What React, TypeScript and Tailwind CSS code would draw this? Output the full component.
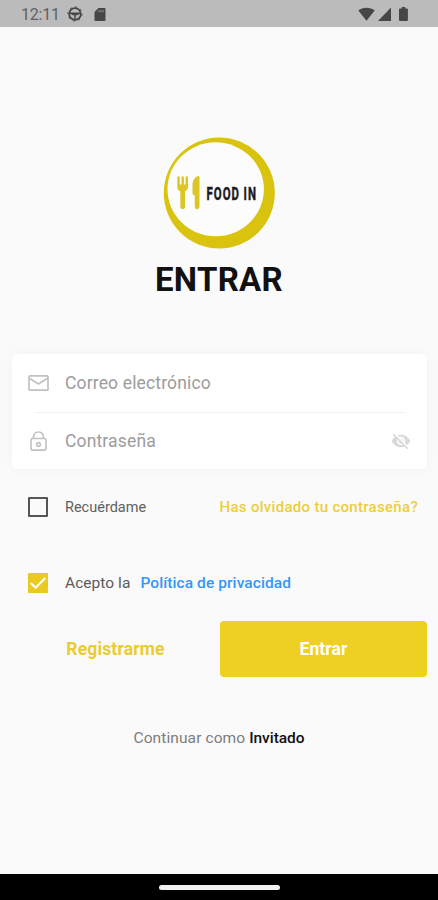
import { useState } from "react";

function StatusBar() {
  return (
    <div className="flex h-[27px] items-center justify-between bg-[#bbbbbb] pl-[21px] pr-[30px] text-[#464646]">
      <div className="flex items-center">
        <span className="w-[38px] whitespace-nowrap pt-[2px] text-[16px] leading-[27px] tracking-[-0.2px] text-[#606060]">
          12:11
        </span>
        <svg className="ml-2 h-4 w-4" viewBox="0 0 16 16" fill="none" stroke="currentColor">
          <circle cx="8" cy="8" r="5.8" strokeWidth="1.8" />
          <circle cx="8" cy="8" r="7.1" strokeWidth="1" strokeDasharray="1.8 3.77" />
          <path d="M2.5 7.3h11M8 7.5v6M4.5 8 8 9l3.5-1" strokeWidth="1.4" />
        </svg>
        <svg className="ml-[11px] mt-px h-[13px] w-[12px]" viewBox="0 0 11 13" fill="currentColor">
          <path d="M4 0h6a1 1 0 0 1 1 1v11a1 1 0 0 1-1 1H1a1 1 0 0 1-1-1V4z" />
          <path d="M4.5 2v2.3M6.5 2v2.3M8.5 2v2.3" stroke="#999" strokeWidth="0.9" />
        </svg>
      </div>
      <div className="flex items-center gap-[3px]">
        <svg className="h-[14px] w-[17px]" viewBox="0 0 17 14" fill="currentColor">
          <path d="M0.3 3.6C5 -0.2 12 -0.2 16.7 3.6L8.5 13.7z" />
        </svg>
        <svg className="h-[14px] w-[13px]" viewBox="0 0 13 14" fill="currentColor">
          <path d="M13 0.5V14H0z" />
        </svg>
        <svg className="ml-[5px] h-[14px] w-[9px]" viewBox="0 0 9 14" fill="currentColor">
          <path d="M2.8 0h3.4v1.4H8a.9.9 0 0 1 .9.9V13a1 1 0 0 1-1 1H1a1 1 0 0 1-1-1V2.3a.9.9 0 0 1 .9-.9h1.9z" />
        </svg>
      </div>
    </div>
  );
}

function Logo() {
  return (
    <svg className="h-28 w-28 overflow-visible" viewBox="0 0 112 112">
      <circle cx="56.3" cy="56" r="55.5" fill="#d9c30e" />
      <ellipse cx="52.7" cy="52.3" rx="48.2" ry="47" fill="#fcfcfc" />
      <g fill="#dcc527">
        <path d="M14.3 40.5a1.2 1.2 0 0 1 2.4 0v7h1.8v-7a1.2 1.2 0 0 1 2.4 0v7h1.7v-7a1.2 1.2 0 0 1 2.4 0v9.2c0 2.6-1.3 4-2.9 4.6v15.5a2.4 2.4 0 0 1-4.8 0V54.3c-1.7-.6-3-2-3-4.6z" />
        <path d="M36.5 40.7v29.1a2.4 2.4 0 0 1-4.8 0V58.5c-1.4-.3-2.2-1.2-2.2-2.5v-8c0-4.5 2.4-8 5.2-8.8 1.1-.3 1.8.3 1.8 1.5z" />
      </g>
      {/* condensed lettering */}
      <text
        transform="translate(43.6 62.5) scale(0.6 1)"
        fill="#1b1a22"
        stroke="#1b1a22"
        strokeWidth="0.5"
        className="font-['Roboto','Liberation_Sans',sans-serif] text-[19px] font-bold tracking-[1.6px]"
      >
        FOOD IN
      </text>
    </svg>
  );
}

function MailIcon() {
  return (
    <svg className="h-4 w-[21px]" viewBox="0 0 21 16" fill="none" stroke="#c1c1c1" strokeWidth="1.7">
      <rect x="1" y="0.9" width="19" height="14.3" rx="1" />
      <path d="M1.5 3.2 10.5 9l9-5.8" />
    </svg>
  );
}

function LockIcon() {
  return (
    <svg className="h-5 w-[17px]" viewBox="0 0 17 20" fill="none" stroke="#c1c1c1" strokeWidth="1.6">
      <rect x="1" y="7.5" width="15" height="11.6" rx="1.8" />
      <path d="M3.3 7.5C3.3 3.5 5.3 1 8.5 1s5.2 2.5 5.2 6.5" />
      <circle cx="8.5" cy="13.4" r="1.8" />
    </svg>
  );
}

function EyeOffIcon() {
  return (
    <svg className="h-5 w-5" viewBox="0 0 24 24" fill="#d9d9d9">
      <path d="M12 7c2.76 0 5 2.24 5 5 0 .65-.13 1.26-.36 1.83l2.92 2.92c1.51-1.26 2.7-2.89 3.43-4.75-1.73-4.39-6-7.5-11-7.5-1.4 0-2.74.25-3.98.7l2.16 2.16C10.74 7.13 11.35 7 12 7zM2 4.27l2.28 2.28.46.46C3.08 8.3 1.78 10.02 1 12c1.73 4.39 6 7.5 11 7.5 1.55 0 3.03-.3 4.38-.84l.42.42L19.73 22 21 20.73 3.27 3 2 4.27zM7.53 9.8l1.55 1.55c-.05.21-.08.43-.08.65 0 1.66 1.34 3 3 3 .22 0 .44-.03.65-.08l1.55 1.55c-.67.33-1.41.53-2.2.53-2.76 0-5-2.24-5-5 0-.79.2-1.53.53-2.2zm4.31-.78l3.15 3.15.02-.16c0-1.66-1.34-3-3-3l-.17.01z" />
    </svg>
  );
}

function Checkbox({ checked, onChange }: { checked: boolean; onChange: () => void }) {
  return (
    <button
      type="button"
      role="checkbox"
      aria-checked={checked}
      onClick={onChange}
      className={
        checked
          ? "flex h-5 w-5 items-center justify-center rounded-[1px] bg-[#eaca20]"
          : "h-5 w-5 rounded-[1px] border-2 border-[#555555]"
      }
    >
      {checked && (
        <svg className="h-5 w-5" viewBox="0 0 20 20" fill="none" stroke="#fff" strokeWidth="2.2">
          <path d="M2.8 10 7.6 14.7 17.3 5" />
        </svg>
      )}
    </button>
  );
}

export default function App() {
  const [email, setEmail] = useState("");
  const [password, setPassword] = useState("");
  const [showPassword, setShowPassword] = useState(false);
  const [remember, setRemember] = useState(false);
  const [accepted, setAccepted] = useState(true);

  return (
    <div className="flex h-[900px] w-[438px] flex-col overflow-hidden bg-[#fafafa] font-['Roboto','Liberation_Sans',sans-serif]">
      <StatusBar />

      <main className="flex flex-1 flex-col">
        <div className="flex flex-col items-center pt-[110px]">
          <Logo />
          <h1 className="mt-[11px] whitespace-nowrap text-[33px] font-bold leading-10 tracking-[0.3px] text-[#111111]">
            ENTRAR
          </h1>
        </div>

        <form onSubmit={(e) => e.preventDefault()}>
          <div className="ml-3 mr-[11px] mt-[54px] h-[115px] rounded-[5px] bg-white shadow-[0_0_12px_rgba(0,0,0,0.035)]">
            <div className="flex h-[58px] items-center pl-4">
              <MailIcon />
              <input
                type="email"
                value={email}
                onChange={(e) => setEmail(e.target.value)}
                placeholder="Correo electrónico"
                className="ml-4 w-[300px] bg-transparent text-[17.5px] tracking-[0.15px] outline-none placeholder:text-[#9c9c9c]"
              />
            </div>
            <div className="ml-6 mr-[22px] h-px bg-[#f1f1f1]" />
            <div className="flex h-[56px] items-center pl-[18px] pr-4">
              <LockIcon />
              <input
                type={showPassword ? "text" : "password"}
                value={password}
                onChange={(e) => setPassword(e.target.value)}
                placeholder="Contraseña"
                className="ml-[18px] w-[300px] bg-transparent text-[17.5px] tracking-[0.15px] outline-none placeholder:text-[#9c9c9c]"
              />
              <button type="button" onClick={() => setShowPassword(!showPassword)} className="ml-auto">
                <EyeOffIcon />
              </button>
            </div>
          </div>

          <div className="mt-7 flex h-5 items-center pl-7 pr-5">
            <Checkbox checked={remember} onChange={() => setRemember(!remember)} />
            <span className="ml-[17px] whitespace-nowrap pt-px text-[14.5px] text-[#606060]">
              Recuérdame
            </span>
            <a href="#" className="ml-auto whitespace-nowrap pt-px text-[15px] font-medium tracking-[0.3px] text-[#ecce3c]">
              Has olvidado tu contraseña?
            </a>
          </div>

          <div className="mt-14 flex h-5 items-center pl-7">
            <Checkbox checked={accepted} onChange={() => setAccepted(!accepted)} />
            <span className="ml-[17px] whitespace-nowrap pt-[2px] text-[15.5px] tracking-[0.05px] text-[#5c5c5c]">
              Acepto la
            </span>
            <a href="#" className="ml-[10px] whitespace-nowrap pt-[2px] text-[15.5px] font-medium tracking-[0.08px] text-[#3396fa]">
              Política de privacidad
            </a>
          </div>

          <div className="mt-7 flex h-14 pl-3 pr-[11px]">
            <button type="button" className="flex-1 pr-px pt-px text-[17.5px] font-bold tracking-[0.15px] text-[#ebcc30]">
              Registrarme
            </button>
            <button
              type="submit"
              className="w-[207px] rounded-[4px] bg-[#edd022] pt-px text-[17.5px] font-bold tracking-[0.1px] text-white"
            >
              Entrar
            </button>
          </div>
        </form>

        <p className="mt-[51px] text-center text-[15.5px] leading-5 tracking-[0.1px] text-[#7d7d7d]">
          Continuar como <span className="font-medium tracking-[-0.05px] text-[#111111]">Invitado</span>
        </p>
      </main>

      <div className="flex h-[26px] items-center justify-center bg-black">
        <div className="h-[5px] w-[121px] rounded-full bg-[#f2f2f2]" />
      </div>
    </div>
  );
}
